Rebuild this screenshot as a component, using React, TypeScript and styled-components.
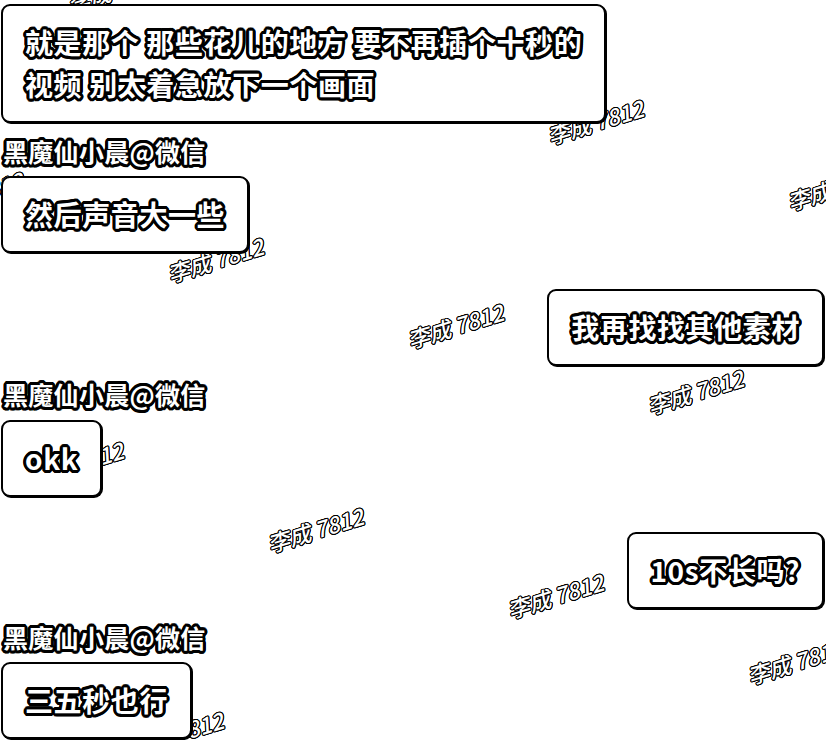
import styled, { createGlobalStyle } from "styled-components";

// white letters with a hard black rim, built from a ring of shadows
const ring = (radius: number) => {
  const shadows: string[] = [];
  for (let r = 1; r <= radius; r += 1) {
    for (let a = 0; a < 360; a += 22.5) {
      const x = (Math.cos((a * Math.PI) / 180) * r).toFixed(2);
      const y = (Math.sin((a * Math.PI) / 180) * r).toFixed(2);
      shadows.push(`${x}px ${y}px 0 #000`);
    }
  }
  return shadows.join(", ");
};

const GlobalStyle = createGlobalStyle`
  html, body {
    margin: 0;
    padding: 0;
    background: #fff;
  }
  body {
    width: 826px;
    height: 740px;
    overflow: hidden;
    font-family: "Noto Sans CJK SC", "Noto Sans", sans-serif;
  }
`;

const Screen = styled.div`
  position: relative;
  width: 826px;
  height: 740px;
  overflow: hidden;
  background: #fff;
`;

const WatermarkLayer = styled.div`
  position: absolute;
  inset: 0;
  z-index: 0;
  pointer-events: none;
`;

const Mark = styled.span`
  position: absolute;
  transform: translate(-50%, -50%) rotate(-17deg);
  font-size: 22px;
  font-style: italic;
  font-weight: 500;
  line-height: 24px;
  white-space: nowrap;
  color: #fff;
  text-shadow: ${ring(1)};
`;

const Thread = styled.div`
  position: relative;
  z-index: 1;
  display: flex;
  flex-direction: column;
  padding: 4px 2px 0 1px;
`;

const Row = styled.div<{ $side: "left" | "right"; $gap: number }>`
  display: flex;
  justify-content: ${(p) => (p.$side === "right" ? "flex-end" : "flex-start")};
  margin-top: ${(p) => p.$gap}px;
`;

const Sender = styled.div<{ $gap: number }>`
  margin-top: ${(p) => p.$gap}px;
  padding-left: 2px;
  font-size: 25px;
  line-height: 28px;
  letter-spacing: 0.3px;
  font-weight: 700;
  color: #fff;
  text-shadow: ${ring(3)};
`;

const Bubble = styled.div`
  box-sizing: border-box;
  padding: 15px 22px 16px 22px;
  background: #fff;
  border: 2px solid #000;
  border-radius: 9px;
  box-shadow: 1px 1px 0 #000;
  font-size: 28px;
  line-height: 42px;
  letter-spacing: 0.6px;
  font-weight: 700;
  white-space: nowrap;
  color: #fff;
  text-shadow: ${ring(3)};
`;

const Line = styled.div``;

type Item =
  | { kind: "sender"; name: string; gap: number }
  | { kind: "msg"; side: "left" | "right"; lines: string[]; gap: number };

const items: Item[] = [
  {
    kind: "msg",
    side: "left",
    lines: ["就是那个 那些花儿的地方 要不再插个十秒的", "视频 别太着急放下一个画面"],
    gap: 0,
  },
  { kind: "sender", name: "黑魔仙小晨@微信", gap: 14 },
  { kind: "msg", side: "left", lines: ["然后声音大一些"], gap: 11 },
  { kind: "msg", side: "right", lines: ["我再找找其他素材"], gap: 36 },
  { kind: "sender", name: "黑魔仙小晨@微信", gap: 14 },
  { kind: "msg", side: "left", lines: ["okk"], gap: 12 },
  { kind: "msg", side: "right", lines: ["10s不长吗?"], gap: 35 },
  { kind: "sender", name: "黑魔仙小晨@微信", gap: 14 },
  { kind: "msg", side: "left", lines: ["三五秒也行"], gap: 11 },
];

// tiled watermark: origin plus two lattice steps
const marks: { x: number; y: number }[] = [];
for (let i = -3; i <= 3; i++) {
  for (let j = -3; j <= 3; j++) {
    const x = 455 + i * 240 + j * 100;
    const y = 325 + i * 66 + j * 270;
    if (x > -60 && x < 890 && y > -30 && y < 770) marks.push({ x, y });
  }
}

export default function App() {
  return (
    <Screen>
      <GlobalStyle />
      <WatermarkLayer>
        {marks.map((m) => (
          <Mark key={`${m.x}-${m.y}`} style={{ left: m.x, top: m.y }}>
            李成 7812
          </Mark>
        ))}
      </WatermarkLayer>
      <Thread>
        {items.map((it, i) =>
          it.kind === "sender" ? (
            <Sender key={i} $gap={it.gap}>
              {it.name}
            </Sender>
          ) : (
            <Row key={i} $side={it.side} $gap={it.gap}>
              <Bubble>
                {it.lines.map((l) => (
                  <Line key={l}>{l}</Line>
                ))}
              </Bubble>
            </Row>
          )
        )}
      </Thread>
    </Screen>
  );
}
